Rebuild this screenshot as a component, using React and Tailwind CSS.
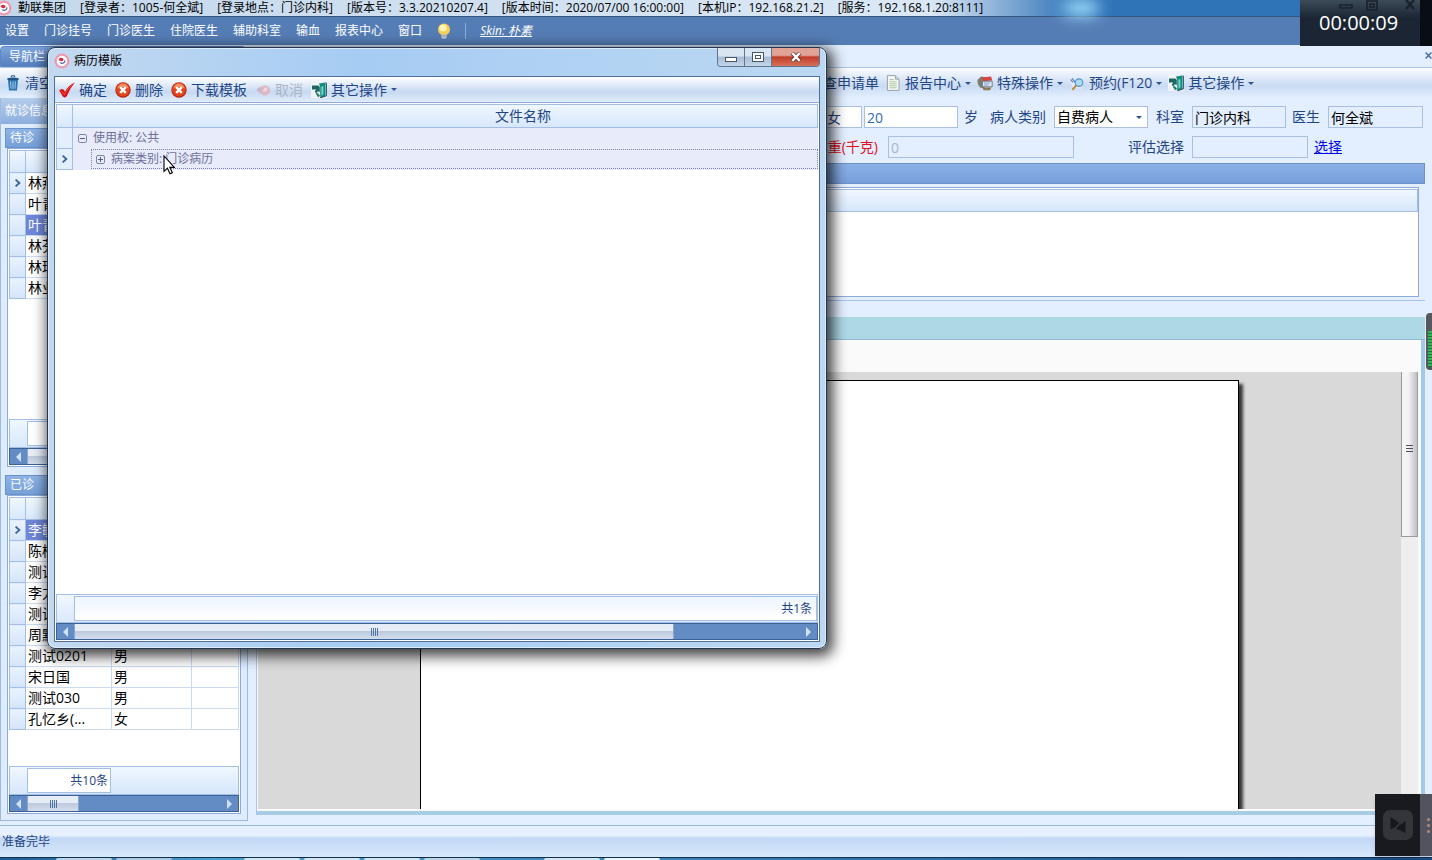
import React from "react";

const titleParts = [
  "[登录者：1005-何全斌]",
  "[登录地点：门诊内科]",
  "[版本号：3.3.20210207.4]",
  "[版本时间：2020/07/00 16:00:00]",
  "[本机IP：192.168.21.2]",
  "[服务：192.168.1.20:8111]",
];

const menus = ["设置", "门诊挂号", "门诊医生", "住院医生", "辅助科室", "输血", "报表中心", "窗口"];

const waiting = ["林燕", "叶青", "叶青", "林芬", "林琼", "林业"];

const finished = [
  { name: "李敏", sex: "" },
  { name: "陈楠", sex: "" },
  { name: "测试", sex: "" },
  { name: "李力", sex: "" },
  { name: "测试", sex: "" },
  { name: "周默", sex: "" },
  { name: "测试0201", sex: "男" },
  { name: "宋日国", sex: "男" },
  { name: "测试030", sex: "男" },
  { name: "孔忆乡(...", sex: "女" },
];

const Logo = () => (
  <svg className="size-4 shrink-0" viewBox="0 0 16 16">
    <circle cx="8" cy="8" r="7.6" fill="#f3a6ba" />
    <circle cx="8" cy="8" r="6.4" fill="none" stroke="#e3748f" strokeWidth="1" strokeDasharray="1 1" />
    <circle cx="8" cy="8" r="5.2" fill="#fff" />
    <path d="M4.5 6.5Q6 3.6 8.6 5.2Q10.6 6.4 8.4 8Q6.2 8.6 4.5 6.5Z" fill="#d8243c" />
    <path d="M5.4 9.6Q8 12.4 11.2 9.2Q11.8 7.6 10.8 6.6Q10.8 9.4 8.4 9.8Z" fill="#3f4f96" />
  </svg>
);

const Bulb = () => (
  <svg className="h-4 w-3.5" viewBox="0 0 14 16">
    <circle cx="7" cy="6.4" r="6" fill="#f6cf58" />
    <circle cx="6" cy="5" r="3.6" fill="#fff3b4" />
    <path d="M4.4 11.4h5.2v3L8.4 15.6H5.6L4.4 14.4Z" fill="#d9dde4" />
    <path d="M4.4 12.2h5.2M4.4 13.8h5.2" stroke="#8a8f9c" strokeWidth=".8" />
  </svg>
);

const Trash = () => (
  <svg className="size-4" viewBox="0 0 16 16">
    <path d="M3 5h10l-1 10.4H4Z" fill="#2f74ae" />
    <path d="M2.4 3.2Q8 1.6 13.6 3.2V5H2.4Z" fill="#1f5488" />
    <path d="M6.4 2.2V.8h3.2v1.4" fill="none" stroke="#1f5488" />
    <path d="M5.6 6.4l.5 7.4M8 6.4v7.4M10.4 6.4l-.5 7.4" stroke="#9fcdec" />
  </svg>
);

const Check = () => (
  <svg className="size-4" viewBox="0 0 16 16">
    <path d="M.2 8.6Q2 5.8 4.4 7.6L6 9.8Q9 3.2 15.8.4Q10.6 6.6 7.8 14.2Q5.6 16.4 3.8 14.6Z" fill="#d80f10" />
    <path d="M1.8 8.6L5.4 12.6Q8.4 6.4 13 2.8" fill="none" stroke="#f46a5c" strokeWidth=".8" />
  </svg>
);

const Remove = () => (
  <svg className="size-4" viewBox="0 0 16 16">
    <circle cx="8" cy="8" r="7.7" fill="#b8260f" />
    <circle cx="8" cy="7.6" r="6.8" fill="#e2441f" />
    <path d="M2.2 6.4Q3.8 1.8 8 1.6Q12.2 1.8 13.8 6.4Q8 4 2.2 6.4Z" fill="#f28d62" />
    <path d="M5.2 5.2l5.6 5.6M10.8 5.2l-5.6 5.6" stroke="#fff" strokeWidth="2.4" />
  </svg>
);

const Undo = () => (
  <svg className="size-4" viewBox="0 0 16 16">
    <circle cx="10" cy="8.4" r="5.2" fill="#dcb9c6" />
    <path d="M1.4 7.6L5.6 4v2.4h2v3h-2V12Z" fill="#cdb6c9" />
    <path d="M7.6 9l2.4-3.4L12.6 6l-1.8 3.6Z" fill="#f0dde4" />
  </svg>
);

const Door = () => (
  <svg className="size-4" viewBox="0 0 16 16">
    <path d="M0 0h16v16H0Z" fill="#eef3f5" />
    <path d="M8 1.6L14.6.4V14L9.2 15.8V5Z" fill="#118a80" />
    <path d="M10.4 4.6L12.4 4V12.6L10.4 13.4Z" fill="#6fd6c6" />
    <path d="M1 3.6h6.4L8.8 5v5L6.8 9.2L5 11.4L3.8 9.6L5.2 7.4H1Z" fill="#1f6662" />
    <path d="M6 10.4l3.2 3.4l-2 1.4L4.8 12Z" fill="#2b7a74" />
    <path d="M14.6.4l1 .8v12.6l-6.4 2" fill="none" stroke="#263c50" strokeWidth=".9" />
  </svg>
);

const Doc = () => (
  <svg className="size-4" viewBox="0 0 16 16">
    <path d="M2.4.6h8L14 4.2v11.2H2.4Z" fill="#f7f9f2" stroke="#8c99a0" strokeWidth=".9" />
    <path d="M10.4.6v3.6H14" fill="#cfd8dc" stroke="#8c99a0" strokeWidth=".8" />
    <path d="M4.4 4.6h4.4M4.4 6.8h7.4M4.4 8.8h7.4M4.4 10.8h7.4M4.4 12.8h7.4" stroke="#a2bf98" strokeWidth=".9" />
  </svg>
);

const Cards = () => (
  <svg className="size-4" viewBox="0 0 16 16">
    <path d="M.4 5L4 1.6L9 2.2L7 13.4L3 12.6L.8 9Z" fill="#7c7f70" />
    <path d="M4.6 2.6L14 1.4L15.4 5.6L6.2 6.2Z" fill="#d5473c" />
    <path d="M5.4 6.2h9.8v5.6H5.4Z" fill="#dfe7ef" stroke="#5a6b82" strokeWidth=".8" />
    <path d="M5.4 12.4h9l-1.4 2.8H6.6Z" fill="#8c7a55" />
    <path d="M7 8h6M7 10h4.4" stroke="#7fa2cf" />
  </svg>
);

const Lens = () => (
  <svg className="size-4" viewBox="0 0 16 16">
    <path d="M1 2.4L9 3.4L13 6.4L12.4 14L3.4 11.4Z" fill="#e8edf6" />
    <path d="M1.6 4.4l2.4 3M3.2 3.4l3 4" stroke="#5f77b8" strokeWidth="1.1" />
    <circle cx="10" cy="7.6" r="3.8" fill="#a9dcf5" stroke="#5599cc" strokeWidth="1.2" />
    <path d="M7.2 10.4L3.4 14.8" stroke="#c5843a" strokeWidth="2" />
  </svg>
);

const Pointer = () => (
  <svg className="absolute left-[115px] top-[107px] h-5 w-3" viewBox="0 0 12 20">
    <path d="M1 1v15.4l3.4-3.2 2.6 5.6 2.4-1-2.6-5.4h4.6Z" fill="#fff" stroke="#000" strokeWidth="1.1" />
  </svg>
);

const Caret = () => <span className="ml-1 border-x-[3px] border-t-[3px] border-x-transparent border-t-[#2c5592]" />;

const RowArrow = () => (
  <svg className="mx-auto size-2" viewBox="0 0 8 8">
    <path d="M1.6.6L5.4 4L1.6 7.4" fill="none" stroke="#3d6496" strokeWidth="1.8" />
  </svg>
);

const ToolButton = ({ icon, label, menu, disabled }) => (
  <button
    type="button"
    disabled={disabled}
    className="flex h-6 shrink-0 items-center whitespace-nowrap text-sm text-[#1f4585] disabled:text-[#a9b4c6]">
    {icon}
    <span className={icon ? "ml-1" : ""}>{label}</span>
    {menu && <Caret />}
  </button>
);

const Grip = () => (
  <span className="flex gap-px">
    <i className="h-2 w-px bg-[#4f74a8]" />
    <i className="h-2 w-px bg-[#4f74a8]" />
    <i className="h-2 w-px bg-[#4f74a8]" />
    <i className="h-2 w-px bg-[#4f74a8]" />
  </span>
);

const HScroll = ({ thumb, grip }) => (
  <div className="flex h-[17px] shrink-0 border border-[#3b6298] bg-[#638cc4]">
    <button type="button" aria-label="向左" className="flex w-[17px] shrink-0 items-center justify-center">
      <span className="border-y-[5px] border-r-[5px] border-y-transparent border-r-[#cfe2fa]" />
    </button>
    <div
      className={`flex items-center justify-center border-x border-[#8aa7cf] bg-linear-to-b from-[#e6edf6] from-45% via-[#bccadd] via-50% to-[#d3deec] ${thumb}`}>
      {grip && <Grip />}
    </div>
    <button type="button" aria-label="向右" className="ml-auto flex w-[17px] shrink-0 items-center justify-center">
      <span className="border-y-[5px] border-l-[5px] border-y-transparent border-l-[#cfe2fa]" />
    </button>
  </div>
);

const PatientGrid = ({ title, rows, active, selected, total }) => (
  <section className="flex flex-1 flex-col">
    <h2 className="flex h-5 items-center border border-[#6b93cb] bg-linear-to-b from-[#8fb4e6] to-[#759fd8] pl-1 text-xs text-white">
      {title}
    </h2>
    <div className="ml-0.5 mr-0.5 flex flex-1 flex-col border border-[#8cabd8] bg-white p-px">
      <table className="w-full table-fixed border-collapse text-sm text-black">
        <colgroup>
          <col className="w-4" />
          <col className="w-[86px]" />
          <col className="w-20" />
          <col />
        </colgroup>
        <thead>
          <tr className="h-[22px] bg-linear-to-b from-[#f0f7ff] to-[#d6e7fb]">
            <th className="border border-[#a5bfe4]" />
            <th className="border border-[#a5bfe4]" />
            <th className="border border-[#a5bfe4]" />
            <th className="border border-[#a5bfe4]" />
          </tr>
        </thead>
        <tbody>
          {rows.map((row, i) => (
            <tr key={i} className="h-[21px] leading-5">
              <td className="border border-[#a5bfe4] bg-linear-to-b from-[#eaf3ff] to-[#d3e4f9] p-0">
                {i === active && <RowArrow />}
              </td>
              <td
                className={
                  i === selected
                    ? "overflow-hidden whitespace-nowrap bg-[#6f86d8] p-0 pl-0.5 text-white"
                    : "overflow-hidden whitespace-nowrap border border-[#c9daf2] p-0 pl-0.5"
                }>
                {row.name}
              </td>
              <td className="border border-[#c9daf2] p-0 pl-0.5">{row.sex}</td>
              <td className="border border-[#c9daf2] p-0" />
            </tr>
          ))}
        </tbody>
      </table>
      <div className="mt-auto flex h-[29px] border border-[#a5bfe4] bg-linear-to-b from-[#f0f7ff] to-[#d6e7fb] py-px pl-[17px]">
        <div className="flex w-[84px] items-center justify-end border border-[#a5bfe4] bg-white pr-0.5 text-xs text-[#1f4585]">
          {total}
        </div>
      </div>
      <HScroll thumb="w-[52px]" grip />
    </div>
  </section>
);

const field = "h-[22px] border border-[#a9c0e0] px-0.5 text-sm text-black";

const TemplateDialog = () => (
  <div
    role="dialog"
    aria-label="病历模版"
    className="absolute left-[47px] top-[47px] flex h-[602px] w-[780px] flex-col rounded-lg border border-[#24364e] bg-linear-to-r from-[#c3d9f0] via-[#a6ccf3] via-40% to-[#bcd8f2] px-1.5 pb-1.5 shadow-[3px_4px_14px_3px_rgba(0,0,0,0.75)] ring-1 ring-inset ring-[#dcebfa]">
    <header className="flex h-7 shrink-0 items-start">
      <div className="flex h-[26px] items-center gap-1 text-xs text-black">
        <Logo />
        病历模版
      </div>
      <div className="ml-auto flex h-[19px] overflow-hidden rounded-b border border-t-0 border-[#5f7590]">
        <button
          type="button"
          aria-label="最小化"
          className="flex w-[27px] items-center justify-center border-r border-[#5f7590] bg-linear-to-b from-[#d9e5f1] from-45% via-[#a9bdd3] via-50% to-[#c3d5e8]">
          <span className="mt-1 h-[5px] w-3 border border-[#45566c] bg-white" />
        </button>
        <button
          type="button"
          aria-label="最大化"
          className="flex w-[27px] items-center justify-center border-r border-[#5f7590] bg-linear-to-b from-[#d9e5f1] from-45% via-[#a9bdd3] via-50% to-[#c3d5e8]">
          <span className="flex h-2.5 w-3 items-center justify-center border border-[#45566c] bg-white">
            <i className="h-1 w-1.5 border border-[#45566c]" />
          </span>
        </button>
        <button
          type="button"
          aria-label="关闭"
          className="flex w-[47px] items-center justify-center bg-linear-to-b from-[#e2a397] from-40% via-[#c03c25] via-50% to-[#d5705a]">
          <svg className="h-2.5 w-3" viewBox="0 0 12 10">
            <path d="M2.2 1l7.6 8M9.8 1L2.2 9" stroke="#5a3030" strokeWidth="4" />
            <path d="M2.4 1.2l7.2 7.6M9.6 1.2L2.4 8.8" stroke="#fff" strokeWidth="2.4" />
          </svg>
        </button>
      </div>
    </header>
    <div className="flex flex-1 flex-col border border-[#4f6f99] bg-[#dfecfc]">
      <div className="flex h-[25px] shrink-0 items-center gap-2 bg-linear-to-b from-white via-[#c7daf2] via-60% to-[#e1ecfb] pl-1">
        <ToolButton icon={<Check />} label="确定" />
        <ToolButton icon={<Remove />} label="删除" />
        <ToolButton icon={<Remove />} label="下载模板" />
        <ToolButton icon={<Undo />} label="取消" disabled />
        <ToolButton icon={<Door />} label="其它操作" menu />
      </div>
      <div className="flex flex-1 flex-col border-t border-[#8cabd8] bg-white p-px">
        <table className="w-full table-fixed border-collapse">
          <colgroup>
            <col className="w-4" />
            <col />
          </colgroup>
          <thead>
            <tr className="h-[23px] bg-linear-to-b from-[#f0f7ff] to-[#d6e7fb]">
              <th className="border border-[#a5bfe4] p-0" />
              <th className="overflow-hidden border border-[#a5bfe4] p-0 text-sm font-normal leading-5 text-[#1f4585]">
                <div className="w-[900px] text-center">文件名称</div>
              </th>
            </tr>
          </thead>
          <tbody className="text-xs text-[#6d6f9c]">
            <tr className="h-[21px]">
              <td className="border border-[#a5bfe4] bg-[#e4effd] p-0" />
              <td className="bg-[#e8ebfa] p-0">
                <div className="flex items-center gap-1.5 pl-[5px]">
                  <span className="flex size-[9px] items-center justify-center rounded-xs border border-[#7d86a5]">
                    <i className="h-px w-[5px] bg-[#545c80]" />
                  </span>
                  使用权: 公共
                </div>
              </td>
            </tr>
            <tr className="h-[21px]">
              <td className="border border-[#a5bfe4] bg-[#e4effd] p-0">
                <RowArrow />
              </td>
              <td className="bg-[#e8ebfa] p-0 pl-[18px]">
                <div className="flex h-5 items-center gap-1.5 border border-dotted border-[#7d80a8] pl-1">
                  <span className="relative flex size-[9px] items-center justify-center rounded-xs border border-[#7d86a5]">
                    <i className="h-px w-[5px] bg-[#545c80]" />
                    <i className="absolute h-[5px] w-px bg-[#545c80]" />
                  </span>
                  病案类别: 门诊病历
                </div>
              </td>
            </tr>
          </tbody>
        </table>
        <div className="mt-auto flex h-[29px] border border-[#a5bfe4] bg-linear-to-b from-[#f0f7ff] to-[#dbe9fb] py-px pl-[17px]">
          <div className="flex flex-1 items-center justify-end border border-[#a5bfe4] bg-linear-to-b from-[#edf5fe] to-white pr-1 text-xs text-[#1f4585]">
            共1条
          </div>
        </div>
        <HScroll thumb="w-[600px]" grip />
      </div>
    </div>
    <Pointer />
  </div>
);

const VisitForm = () => (
  <form className="flex flex-col gap-2 pl-[568px] pr-0.5 pt-2 text-sm text-[#1f4585]">
    <div className="flex items-center">
      <input aria-label="性别" defaultValue="女" className="mr-0.5 h-[22px] w-[38px] border border-[#a9c0e0] bg-white px-0.5 text-sm text-[#1f4585]" />
      <input id="age" defaultValue="20" className="mr-1.5 h-[22px] w-[94px] border border-[#a9c0e0] bg-white px-0.5 text-sm text-[#2f6cb5]" />
      <label htmlFor="age" className="mr-3">岁</label>
      <label htmlFor="kind" className="mr-2">病人类别</label>
      <div className="relative mr-2">
        <select id="kind" className={`${field} w-[94px] appearance-none bg-white`}>
          <option>自费病人</option>
        </select>
        <span className="pointer-events-none absolute right-1.5 top-2.5 flex">
          <Caret />
        </span>
      </div>
      <label htmlFor="dept" className="mr-2">科室</label>
      <input id="dept" defaultValue="门诊内科" className={`${field} mr-1.5 w-[94px]`} />
      <label htmlFor="doctor" className="mr-2">医生</label>
      <input id="doctor" defaultValue="何全斌" className={`${field} min-w-0 flex-1`} />
    </div>
    <div className="flex items-center">
      <label htmlFor="weight" className="mr-2.5 flex w-[54px] justify-end whitespace-nowrap text-[#dd1020]">体重(千克)</label>
      <input id="weight" placeholder="0" className={`${field} mr-[54px] w-[186px] placeholder:text-[#a9b4c6]`} />
      <label htmlFor="assess" className="mr-2">评估选择</label>
      <input id="assess" className={`${field} mr-1.5 w-[116px]`} />
      <a href="#assess" className="text-[#0000e6] underline">选择</a>
    </div>
  </form>
);

const App = () => {
  return (
    <div className="relative flex h-screen flex-col overflow-hidden bg-[#e3efff] font-['Open_Sans','Noto_Sans_CJK_SC',sans-serif]">
      <header className="flex h-[17px] shrink-0 items-center gap-3.5 whitespace-nowrap border-b border-[#35557c] bg-linear-to-r from-[#c4d8ec] via-[#dbe8f5] via-65% to-[#2f74b6] to-75% text-xs leading-4 text-black">
        <span className="-ml-1 flex items-center gap-1.5">
          <Logo />
          勤联集团
        </span>
        {titleParts.map((part) => (
          <span key={part}>{part}</span>
        ))}
        <span className="ml-[66px] h-4 w-9 rounded-full bg-[#a5e2ff] blur-sm" />
      </header>

      <nav className="flex h-7 shrink-0 items-center gap-[15px] bg-[#557db5] pl-[5px] text-xs text-white">
        {menus.map((item) => (
          <button key={item} type="button">
            {item}
          </button>
        ))}
        <div className="flex items-center gap-3.5">
          <Bulb />
          <span className="h-4 w-px bg-[#8eadd8]" />
          <a href="#skin" className="italic underline">
            Skin: 朴素
          </a>
        </div>
      </nav>

      <div className="flex h-[23px] shrink-0 items-end justify-between border-b border-[#a9c4ea]">
        <div className="h-[21px] w-[246px] rounded-t border border-[#5e86c0] bg-linear-to-b from-[#7ea6dd] to-[#557fbe] pl-2 text-xs leading-5 text-white">
          导航栏
        </div>
        <button type="button" aria-label="关闭" className="mb-2">
          <svg className="size-[7px]" viewBox="0 0 7 7">
            <path d="M.6.6l5.8 5.8M6.4.6L.6 6.4" stroke="#45699f" strokeWidth="1.4" />
          </svg>
        </button>
      </div>

      <div className="flex h-[30px] shrink-0 items-center bg-linear-to-b from-[#fbfcff] via-[#c9dbf3] via-60% to-[#e3efff] pl-[5px]">
        <div className="w-[804px]">
          <ToolButton icon={<Trash />} label="清空" />
        </div>
        <div className="flex gap-1.5">
          <ToolButton label="检查申请单" />
          <ToolButton icon={<Doc />} label="报告中心" menu />
          <ToolButton icon={<Cards />} label="特殊操作" menu />
          <ToolButton icon={<Lens />} label="预约(F120" menu />
          <ToolButton icon={<Door />} label="其它操作" menu />
        </div>
      </div>

      <div className="flex min-h-0 flex-1">
        <aside className="flex w-[248px] shrink-0 flex-col border-x border-b border-[#9db9e0] bg-[#dfecfd]">
          <div className="flex h-[26px] items-center border-b border-[#8badda] bg-linear-to-b from-[#b5cdec] to-[#8fb0de] pl-1 text-xs text-white">
            就诊信息
          </div>
          <div className="flex flex-1 flex-col gap-2 px-1 pb-1.5 pt-1">
            <PatientGrid title="待诊" rows={waiting.map((name) => ({ name }))} active={0} selected={2} />
            <PatientGrid title="已诊" rows={finished} active={0} selected={0} total="共10条" />
          </div>
        </aside>

        <main className="ml-2 mr-[7px] flex min-w-0 flex-1 flex-col">
          <VisitForm />
          <div className="mt-[5px] h-[21px] shrink-0 border border-[#6b93cb] bg-linear-to-b from-[#8ab0e5] to-[#789fda]" />
          <div className="mt-[3px] h-[114px] shrink-0 border-b border-[#a9c4ea] pb-[3px] pr-1.5">
            <div className="h-full border border-[#8cabd8] bg-white pt-px">
              <div className="h-[23px] border border-[#a5bfe4] bg-linear-to-b from-[#f0f7ff] to-[#d6e7fb]" />
            </div>
          </div>
          <div className="mt-4 h-[23px] shrink-0 border-b border-[#8fb8dc] bg-[#add8e6]" />
          <div className="flex min-h-0 flex-1 flex-col border-b-4 border-l border-r-4 border-b-[#a6cde3] border-l-[#a9c4ea] border-r-[#a3c8ea] bg-[#fafafa] pb-0.5">
            <div className="h-8 shrink-0" />
            <div className="ml-px mr-[3px] flex min-h-0 flex-1 bg-[#d9d9d9]">
              <div className="flex min-w-0 flex-1 justify-center overflow-hidden pt-2">
                <div className="w-[819px] border-x border-t border-black bg-white shadow-[4px_4px_3px_rgba(0,0,0,0.75)]" />
              </div>
              <div className="w-[17px] shrink-0 bg-[#eeeeee]">
                <div className="flex h-[165px] flex-col items-center justify-center gap-0.5 border border-t-0 border-[#9a9a9e] bg-linear-to-r from-[#f4f4f5] from-40% to-[#bfc0c5] pb-3">
                  <i className="h-px w-[7px] bg-[#4d4d55]" />
                  <i className="h-px w-[7px] bg-[#4d4d55]" />
                  <i className="h-px w-[7px] bg-[#4d4d55]" />
                </div>
              </div>
            </div>
          </div>
          <div className="h-1.5 shrink-0" />
        </main>
      </div>

      <footer className="mt-1 shrink-0">
        <div className="h-8 border-t border-[#9db9e0] bg-linear-to-b from-[#e6f0ff] from-30% via-[#c3d8f5] via-40% to-[#d8e9fc] pl-0.5 text-xs leading-8 text-[#1f4585]">
          准备完毕
        </div>
        <div className="flex h-[3px] gap-1 border-t border-[#12304f] bg-linear-to-r from-[#1f5c93] via-[#4aa3d3] via-15% to-[#1d4f86] pl-14">
          <i className="w-14 rounded-t bg-[#bcd6e8]" />
          <i className="mr-[68px] w-14 rounded-t bg-[#a9c9e0]" />
          <i className="w-14 rounded-t bg-[#d5e7f3]" />
          <i className="w-14 rounded-t bg-[#d5e7f3]" />
          <i className="w-14 rounded-t bg-[#d5e7f3]" />
          <i className="mr-[60px] w-14 rounded-t bg-[#bcd6e8]" />
          <i className="w-14 rounded-t bg-[#d5e7f3]" />
          <i className="w-14 rounded-t bg-[#eef5fa]" />
        </div>
      </footer>

      <TemplateDialog />

      {/* screen recorder overlays */}
      <div className="absolute right-0 top-0 flex h-[46px] w-[132px] items-center border-r-[12px] border-[#090e14] bg-linear-to-b from-[#3b4b57] to-[#1b2533] to-40% pl-[19px] text-xl text-white">
        00:00:09
        <svg className="absolute right-0 top-0 h-3 w-[84px]" viewBox="0 0 84 12">
          <path d="M4 5h12v3H4ZM31 1h10v9H31ZM34 4h4v3h-4Z" fill="none" stroke="#1a222b" strokeWidth="1.6" />
          <path d="M70 0l8 9M78 0l-8 9" stroke="#1a222b" strokeWidth="2.4" />
        </svg>
      </div>
      <div className="absolute right-0 top-[313px] h-[57px] w-1.5 rounded-l bg-[#55585c] py-0.5 pl-0.5">
        <div className="mt-4 h-9 bg-[repeating-linear-gradient(#35b45a_0_2px,#2b6b40_2px_3px)]" />
      </div>
      <div className="absolute bottom-1 right-0 flex h-[62px] w-[57px] items-center bg-[#181a20] shadow-md">
        <svg className="ml-2 size-[30px]" viewBox="0 0 30 30">
          <rect width="30" height="30" rx="7" fill="#33353a" />
          <path d="M7.5 7L18 14L7.5 19.5ZM22.5 23L12.5 18.5L22.5 11Z" fill="#15171c" />
          <path d="M10 21L20 9" stroke="#33353a" strokeWidth="1.4" />
        </svg>
        <div className="ml-auto flex h-full w-3 flex-col items-center justify-center gap-[3px] bg-[#53525f] pl-1">
          <i className="size-[3px] rounded-full bg-[#b98a78]" />
          <i className="size-[3px] rounded-full bg-[#b98a78]" />
          <i className="size-[3px] rounded-full bg-[#b98a78]" />
        </div>
      </div>
    </div>
  );
};

export default App;
